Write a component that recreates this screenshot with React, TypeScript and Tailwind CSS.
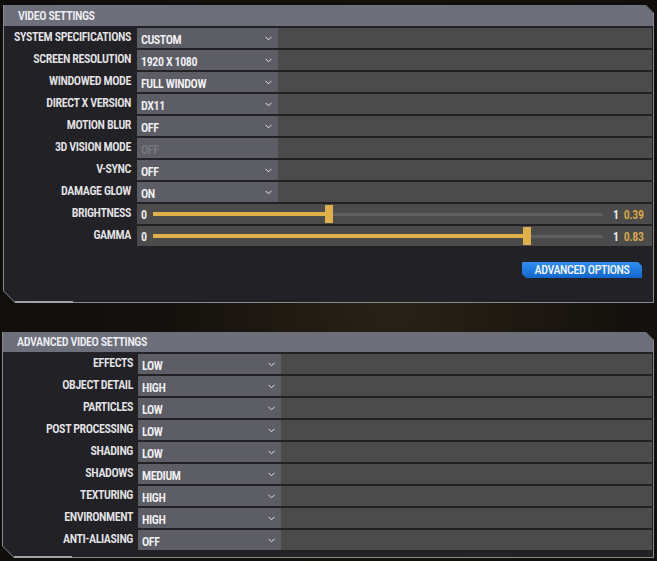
import React from 'react';

type Row = { label: string; value: string; disabled?: boolean };

const videoRows: Row[] = [
  { label: 'SYSTEM SPECIFICATIONS', value: 'CUSTOM' },
  { label: 'SCREEN RESOLUTION', value: '1920 X 1080' },
  { label: 'WINDOWED MODE', value: 'FULL WINDOW' },
  { label: 'DIRECT X VERSION', value: 'DX11' },
  { label: 'MOTION BLUR', value: 'OFF' },
  { label: '3D VISION MODE', value: 'OFF', disabled: true },
  { label: 'V-SYNC', value: 'OFF' },
  { label: 'DAMAGE GLOW', value: 'ON' },
];

const advancedRows: Row[] = [
  { label: 'EFFECTS', value: 'LOW' },
  { label: 'OBJECT DETAIL', value: 'HIGH' },
  { label: 'PARTICLES', value: 'LOW' },
  { label: 'POST PROCESSING', value: 'LOW' },
  { label: 'SHADING', value: 'LOW' },
  { label: 'SHADOWS', value: 'MEDIUM' },
  { label: 'TEXTURING', value: 'HIGH' },
  { label: 'ENVIRONMENT', value: 'HIGH' },
  { label: 'ANTI-ALIASING', value: 'OFF' },
];

const Chevron = () => (
  <svg width="7" height="5" viewBox="0 0 7 5" className="shrink-0">
    <path d="M0.5 0.8 L3.5 3.8 L6.5 0.8" fill="none" stroke="#e4e4e8" strokeWidth="1" />
  </svg>
);

const Panel: React.FC<{ title: string; className: string; headerClass: string; children: React.ReactNode }> = ({
  title,
  className,
  headerClass,
  children,
}) => (
  <div
    className={`relative bg-[#8a8a8e] px-[1px] pb-[1px] [clip-path:polygon(0_0,calc(100%_-_8px)_0,100%_8px,100%_100%,12px_100%,0_calc(100%_-_12px))] ${className}`}
  >
    <div className="flex h-full flex-col bg-[#222226] [clip-path:polygon(0_0,calc(100%_-_8px)_0,100%_8px,100%_100%,11px_100%,0_calc(100%_-_11px))]">
      <div className={`flex items-center whitespace-nowrap bg-[#6d6f7b] pl-[14px] text-[12px] text-[#ececf0] ${headerClass}`}>
        {title}
      </div>
      {children}
    </div>
    {/* brighter accent on the bottom edge */}
    <div className="absolute bottom-0 left-[12px] h-[2px] w-[58px] bg-[#a2a2a6]" />
  </div>
);

const SelectRow: React.FC<{ row: Row; labelClass: string; selectClass: string }> = ({ row, labelClass, selectClass }) => (
  <div className="flex h-[20px] mr-[1px]">
    <div className={`flex items-center justify-end whitespace-nowrap pb-[3px] text-[12px] text-[#e4e4e6] ${labelClass}`}>
      {row.label}
    </div>
    <div className={`flex items-center justify-between bg-[#5d5e65] pl-[4px] pr-[6px] pt-[3px] text-[12px] ${selectClass}`}>
      <span className={row.disabled ? 'text-[#77787e]' : 'text-[#f2f2f4]'}>{row.value}</span>
      {!row.disabled && (
        <span className="-mt-[2px]">
          <Chevron />
        </span>
      )}
    </div>
    <div className="flex-1 bg-[#4b4b4b]" />
  </div>
);

const SliderRow: React.FC<{ label: string; value: number }> = ({ label, value }) => (
  <div className="flex h-[20px] mr-[1px]">
    <div className="flex w-[127px] items-center justify-end whitespace-nowrap pb-[3px] text-[12px] text-[#e4e4e6]">
      {label}
    </div>
    <div className="ml-[6px] flex flex-1 items-center bg-[#4b4b4b] text-[12px]">
      <span className="w-[16px] pl-[4px] pt-[1px] text-[#f0f0f0]">0</span>
      <div className="relative h-full w-[450px]">
        <div className="absolute left-0 right-0 top-[9px] h-[3px] bg-[#5e5e60]" />
        <div className="absolute left-0 top-[8px] h-[4px] bg-[#e2b04a]" style={{ width: `${value * 100}%` }} />
        <div
          className="absolute top-[1px] h-[18px] w-[8px] -translate-x-1/2 bg-[#e2b04a]"
          style={{ left: `${value * 100}%` }}
        />
      </div>
      <span className="ml-[10px] pt-[1px] text-[#f0f0f0]">1</span>
      <span className="ml-[5px] pt-[1px] text-[#d9a748]">{value.toFixed(2)}</span>
    </div>
  </div>
);

export default function App() {
  return (
    <div className="h-[561px] w-[657px] overflow-hidden bg-[radial-gradient(circle_at_60%_55%,#2a2217_0%,#15110d_45%,#0e0c0a_100%)] pt-[5px] font-['Roboto','Liberation_Sans',sans-serif] font-semibold font-stretch-condensed tracking-[-0.4px]">
      <Panel title="VIDEO SETTINGS" className="ml-[3px] h-[298px] w-[651px]" headerClass="h-[21px]">
        <div className="flex flex-col gap-[2px] pt-[2px]">
          {videoRows.map((r) => (
            <SelectRow key={r.label} row={r} labelClass="w-[127px]" selectClass="ml-[6px] w-[141px]" />
          ))}
          <SliderRow label="BRIGHTNESS" value={0.39} />
          <SliderRow label="GAMMA" value={0.83} />
        </div>
        <div className="mt-[16px] flex justify-end pr-[11px]">
          <button className="flex h-[16px] w-[120px] items-center justify-center whitespace-nowrap bg-gradient-to-b from-[#2f8ef2] to-[#1466cc] text-[12px] font-medium text-[#f2f6ff] [clip-path:polygon(0_0,calc(100%_-_4px)_0,100%_4px,100%_100%,4px_100%,0_calc(100%_-_4px))]">
            ADVANCED OPTIONS
          </button>
        </div>
      </Panel>

      <Panel title="ADVANCED VIDEO SETTINGS" className="ml-[2px] mt-[29px] h-[226px] w-[652px]" headerClass="h-[20px]">
        <div className="flex flex-col gap-[2px] pt-[2px]">
          {advancedRows.map((r) => (
            <SelectRow key={r.label} row={r} labelClass="w-[130px]" selectClass="ml-[5px] w-[143px]" />
          ))}
        </div>
      </Panel>
    </div>
  );
}
